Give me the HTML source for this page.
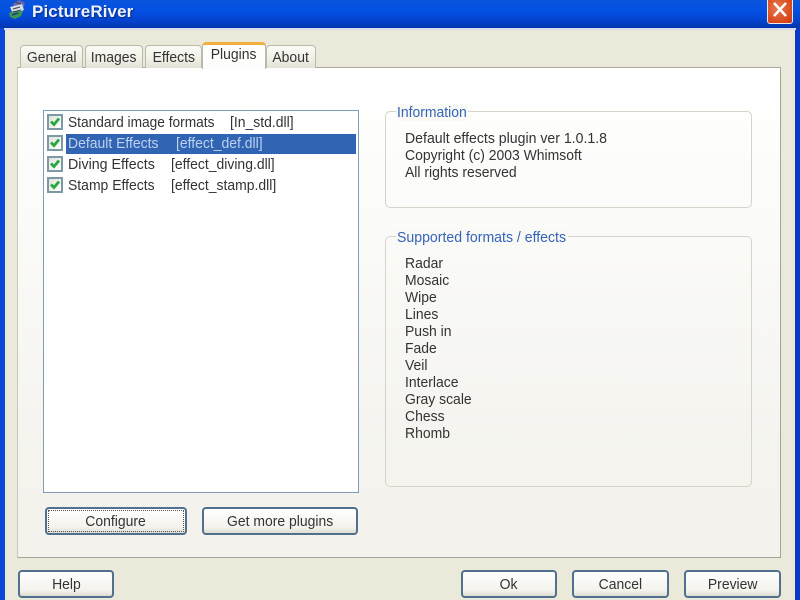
<!DOCTYPE html>
<html>
<head>
<meta charset="utf-8">
<style>
html,body{margin:0;padding:0;background:#ece9d8}
#w{position:relative;width:800px;height:600px;overflow:hidden;background:#ebe9da;font-family:"Liberation Sans",sans-serif;font-size:15px;color:#333;filter:blur(.35px)}
.a{position:absolute;white-space:pre;line-height:17px;transform-origin:0 50%;transform:scaleX(.93)}
.s{display:inline-block;white-space:pre;transform:scaleX(.93)}
.box{position:absolute;box-sizing:border-box}
.tab{position:absolute;box-sizing:border-box;top:45px;height:23px;border:1px solid #b9b9ac;border-bottom:0;border-radius:4px 4px 0 0;background:linear-gradient(#fbfbf8,#f0efe6 60%,#e4e2d6);text-align:center;line-height:23px;font-size:15px}
.btn{position:absolute;box-sizing:border-box;height:28px;border:2px solid #50708f;border-radius:4px;background:linear-gradient(#ffffff,#f4f3ee 75%,#e0ded2);text-align:center;line-height:26px;font-size:15px;color:#333}
.cb{position:absolute;left:47px;width:16px;height:16px;box-sizing:border-box;border:2px solid #7b9aa6;background:linear-gradient(135deg,#e2e2dc,#fff)}
.cb svg{position:absolute;left:0;top:0}
.gb{position:absolute;box-sizing:border-box;left:385px;width:367px;border:1px solid #d6d4c8;border-radius:5px}
.lg{position:absolute;left:396px;color:#3563b8;background:#f9f9f6;padding:0 1px;line-height:17px;white-space:pre;font-size:14px}
</style>
</head>
<body>
<div id="w">
  <div class="box" style="left:0;top:0;width:800px;height:28px;background:linear-gradient(#0a55dc,#0350e2 40%,#0342cc 75%,#0236ae)"></div>
  <div class="box" style="left:0;top:28px;width:5px;height:572px;background:#0a46d8"></div>
  <div class="box" style="left:795px;top:28px;width:5px;height:572px;background:#0a3ac8"></div>
  <div class="box" style="left:4px;top:28px;width:792px;height:2px;background:#d8dcec"></div>

  <svg class="box" style="left:8px;top:0" width="18" height="20" viewBox="0 0 18 20">
    <path d="M5 4 L11 0 L17 3 L15 8 L7 10 Z" fill="#6a68b0"/>
    <path d="M2 7 L14 4 L16 10 L5 14 Z" fill="#d4dce4"/>
    <path d="M1 13 L6 11 L15 11 L13 16 L7 19 L2 17 Z" fill="#3d9650"/>
    <path d="M7 2 L13 4 M5 9 L12 7 M5 12 L13 10" stroke="#445" stroke-width="1"/>
    <path d="M4 15 L10 13" stroke="#1d3c8c" stroke-width="1.5"/>
  </svg>
  <div class="a" style="left:32px;top:2px;font-size:17px;font-weight:bold;color:#eef2ff;line-height:20px;text-shadow:1px 1px 1px #0a2a80;transform:none;letter-spacing:.1px">PictureRiver</div>

  <div class="box" style="left:767px;top:-3px;width:26px;height:27px;border:1px solid #f0e8e0;border-radius:3px;background:radial-gradient(circle at 40% 40%,#e87a50,#d8481c 70%,#c23a18)"></div>
  <svg class="box" style="left:772px;top:2px" width="16" height="16" viewBox="0 0 16 16"><path d="M2 1 L14 14 M14 1 L2 14" stroke="#fff" stroke-width="2.4"/></svg>

  <div class="box" style="left:17px;top:67px;width:764px;height:491px;border:1px solid #a4a39a;border-top-color:#a8a89e;border-left-color:#c8c8bc;background:linear-gradient(#ffffff,#fbfbf9 30%,#f4f3ee 80%,#f3f2ec)"></div>

  <div class="tab" style="left:20px;width:63px"><span class="s">General</span></div>
  <div class="tab" style="left:85px;width:58px"><span class="s">Images</span></div>
  <div class="tab" style="left:145px;width:57px"><span class="s">Effects</span></div>
  <div class="tab" style="left:266px;width:50px"><span class="s">About</span></div>
  <div class="tab" style="left:202px;top:42px;width:64px;height:27px;background:#fdfdfb;border-top:3px solid #f0b040;line-height:19px;z-index:2"><span class="s">Plugins</span></div>

  <div class="box" style="left:43px;top:110px;width:316px;height:383px;border:1px solid #7f9db9;background:#fff"></div>
  <div class="box" style="left:66px;top:134px;width:290px;height:20px;background:#3264b4"></div>

  <div class="cb" style="top:114px"><svg width="12" height="12" viewBox="0 0 12 12"><path d="M2 5.5 L5 8.5 L10 2.5" fill="none" stroke="#28a83c" stroke-width="2.8"/></svg></div>
  <div class="cb" style="top:135px"><svg width="12" height="12" viewBox="0 0 12 12"><path d="M2 5.5 L5 8.5 L10 2.5" fill="none" stroke="#28a83c" stroke-width="2.8"/></svg></div>
  <div class="cb" style="top:156px"><svg width="12" height="12" viewBox="0 0 12 12"><path d="M2 5.5 L5 8.5 L10 2.5" fill="none" stroke="#28a83c" stroke-width="2.8"/></svg></div>
  <div class="cb" style="top:177px"><svg width="12" height="12" viewBox="0 0 12 12"><path d="M2 5.5 L5 8.5 L10 2.5" fill="none" stroke="#28a83c" stroke-width="2.8"/></svg></div>

  <div class="a" style="left:68px;top:114px;transform:scaleX(.915)">Standard image formats</div>
  <div class="a" style="left:230px;top:114px">[In_std.dll]</div>
  <div class="a" style="left:68px;top:135px;color:#bcd2ee">Default Effects</div>
  <div class="a" style="left:176px;top:135px;color:#bcd2ee">[effect_def.dll]</div>
  <div class="a" style="left:68px;top:156px;transform:scaleX(.95)">Diving Effects</div>
  <div class="a" style="left:171px;top:156px">[effect_diving.dll]</div>
  <div class="a" style="left:68px;top:177px">Stamp Effects</div>
  <div class="a" style="left:171px;top:177px">[effect_stamp.dll]</div>

  <div class="btn" style="left:45px;top:507px;width:142px"><span class="s">Configure</span></div>
  <div class="box" style="left:48px;top:510px;width:136px;height:22px;border:1px dotted #555"></div>
  <div class="btn" style="left:202px;top:507px;width:156px"><span class="s">Get more plugins</span></div>

  <div class="gb" style="top:111px;height:97px"></div>
  <div class="lg" style="top:104px;font-size:15px"><span class="s" style="transform-origin:0 50%;margin-right:-5px">Information</span></div>
  <div class="a" style="left:405px;top:130px;transform:scaleX(.94)">Default effects plugin ver 1.0.1.8</div>
  <div class="a" style="left:405px;top:147px">Copyright (c) 2003 Whimsoft</div>
  <div class="a" style="left:405px;top:164px">All rights reserved</div>

  <div class="gb" style="top:236px;height:251px"></div>
  <div class="lg" style="top:229px;font-size:15px"><span class="s" style="transform:scaleX(.94);transform-origin:0 50%;margin-right:-10px">Supported formats / effects</span></div>
  <div class="a" style="left:405px;top:255px">Radar</div>
  <div class="a" style="left:405px;top:272px">Mosaic</div>
  <div class="a" style="left:405px;top:289px">Wipe</div>
  <div class="a" style="left:405px;top:306px">Lines</div>
  <div class="a" style="left:405px;top:323px">Push in</div>
  <div class="a" style="left:405px;top:340px">Fade</div>
  <div class="a" style="left:405px;top:357px">Veil</div>
  <div class="a" style="left:405px;top:374px">Interlace</div>
  <div class="a" style="left:405px;top:391px">Gray scale</div>
  <div class="a" style="left:405px;top:408px">Chess</div>
  <div class="a" style="left:405px;top:425px">Rhomb</div>

  <div class="btn" style="left:18px;top:570px;width:96px"><span class="s">Help</span></div>
  <div class="btn" style="left:461px;top:570px;width:96px"><span class="s">Ok</span></div>
  <div class="btn" style="left:572px;top:570px;width:97px"><span class="s">Cancel</span></div>
  <div class="btn" style="left:684px;top:570px;width:97px"><span class="s">Preview</span></div>
</div>
</body>
</html>
